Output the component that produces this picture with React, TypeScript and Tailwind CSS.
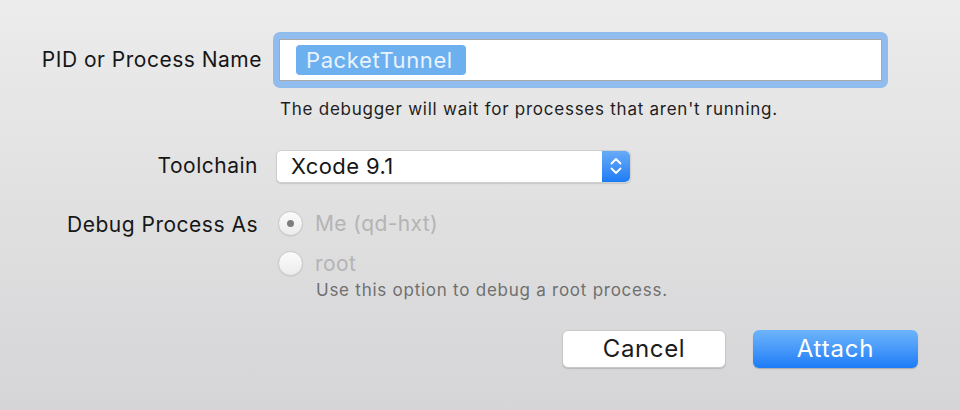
import { useState } from "react";

function Radio({ checked, label }: { checked: boolean; label: string }) {
  return (
    <div className="flex items-center h-[28px]">
      <span className="flex h-[25px] w-[25px] items-center justify-center rounded-full border border-[#c9c9c9] bg-gradient-to-b from-[#fbfbfb] to-[#ececec] shadow-[0_0.5px_1px_rgba(0,0,0,0.12)]">
        {checked && <span className="h-[7px] w-[7px] rounded-full bg-[#7d7d7d]" />}
      </span>
      <span className="ml-[12px] text-[21px] tracking-[0.4px] text-[#b4b4b4]">{label}</span>
    </div>
  );
}

export default function App() {
  const [pid] = useState("PacketTunnel");

  return (
    <div className="h-[410px] w-[960px] overflow-hidden bg-gradient-to-b from-[#ececec] to-[#d5d5d7] pt-[32px] font-['Inter','Liberation_Sans',sans-serif] text-[#161616]">
      <div className="flex h-[56px] items-center">
        <label className="w-[262px] text-right text-[21px] tracking-[0.5px]">PID or Process Name</label>
        <div className="ml-[11px] h-[56px] w-[615px] rounded-[7px] bg-[#91bdee] p-[6px] py-[7px]">
          <div className="flex h-full items-center border border-[#a9a9a9] bg-white pl-[16px]">
            <span className="flex h-[30px] w-[170px] items-center rounded-[4px] bg-[#6cb0f0] pl-[10px] text-[22px] leading-none tracking-[0.6px] text-[#e8f3fe]">
              {pid}
            </span>
          </div>
        </div>
      </div>

      <p className="ml-[280px] mt-[9px] text-[17px] tracking-[0.75px] text-[#1e1e1e]">
        The debugger will wait for processes that aren't running.
      </p>

      <div className="mt-[27px] flex h-[33px] items-center">
        <label className="w-[258px] text-right text-[21px] tracking-[0.5px]">Toolchain</label>
        <div className="ml-[18px] flex h-[33px] w-[355px] rounded-[5px] border border-[#cfcfcf] bg-white shadow-[0_1px_1px_rgba(0,0,0,0.12)]">
          <span className="flex flex-1 items-center pl-[14px] text-[22px] tracking-[0.4px]">Xcode 9.1</span>
          <span className="flex w-[28px] items-center justify-center rounded-r-[5px] bg-gradient-to-b from-[#67abf7] to-[#1a7bf6]">
            <svg width="14" height="22" viewBox="0 0 14 22" fill="none" stroke="white" strokeWidth="1.8" strokeLinecap="round" strokeLinejoin="round">
              <path d="M2.5 8.5 L7 4 L11.5 8.5" />
              <path d="M2.5 13.5 L7 18 L11.5 13.5" />
            </svg>
          </span>
        </div>
      </div>

      <div className="mt-[27px] flex">
        <label className="mt-[1px] h-[28px] w-[258px] text-right text-[21px] leading-[28px] tracking-[0.5px]">Debug Process As</label>
        <div className="ml-[20px] flex flex-col gap-[12px]">
          <Radio checked label="Me (qd-hxt)" />
          <Radio checked={false} label="root" />
        </div>
      </div>
      <p className="ml-[316px] mt-[0px] text-[17px] tracking-[0.75px] text-[#6f6f6f]">Use this option to debug a root process.</p>

      <div className="mt-[27px] flex justify-end gap-[27px] pr-[42px]">
        <button className="h-[38px] w-[164px] rounded-[6px] border border-[#c8c8c8] bg-white text-[24px] tracking-[0.6px] text-[#1c1c1c] shadow-[0_1px_1px_rgba(0,0,0,0.15)]">
          Cancel
        </button>
        <button className="h-[38px] w-[165px] rounded-[6px] bg-gradient-to-b from-[#6db4fa] to-[#1a7cf7] text-[24px] tracking-[0.8px] text-white shadow-[0_1px_1px_rgba(0,0,0,0.2)]">
          Attach
        </button>
      </div>
    </div>
  );
}
